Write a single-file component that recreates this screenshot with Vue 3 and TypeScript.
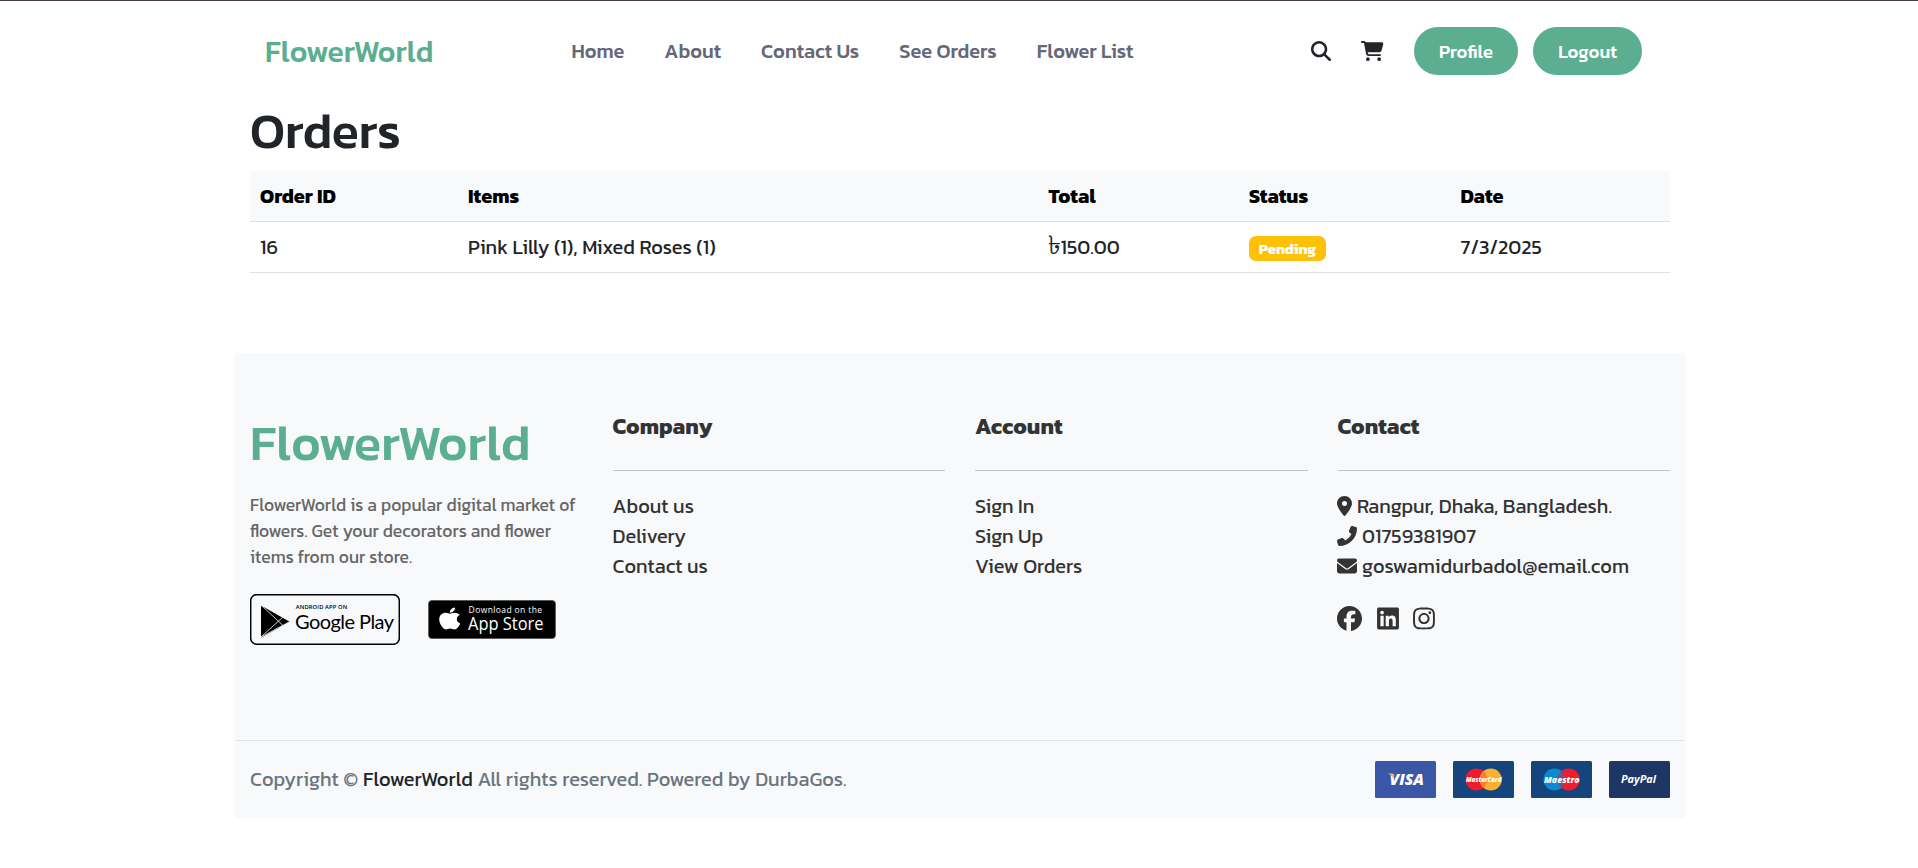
<script setup lang="ts">
interface Order {
  id: number
  items: string
  amount: string
  status: string
  date: string
}

interface LinkColumn {
  title: string
  links: string[]
}

const navLinks: string[] = ['Home', 'About', 'Contact Us', 'See Orders', 'Flower List']

const orders: Order[] = [
  { id: 16, items: 'Pink Lilly (1), Mixed Roses (1)', amount: '150.00', status: 'Pending', date: '7/3/2025' },
]

const columns: LinkColumn[] = [
  { title: 'Company', links: ['About us', 'Delivery', 'Contact us'] },
  { title: 'Account', links: ['Sign In', 'Sign Up', 'View Orders'] },
]
</script>

<template>
  <div class="page">
    <div class="container">
      <header class="navbar">
        <a class="brand">FlowerWorld</a>
        <nav class="links">
          <a v-for="link in navLinks" :key="link">{{ link }}</a>
        </nav>
        <div class="actions">
          <svg class="search" viewBox="0 0 512 512"><path d="M416 208c0 45.900-14.900 88.300-40 122.700L502.600 457.400c12.500 12.500 12.500 32.800 0 45.300s-32.800 12.500-45.300 0L330.700 376c-34.400 25.200-76.800 40-122.700 40C93.100 416 0 322.900 0 208S93.100 0 208 0S416 93.100 416 208zM208 352a144 144 0 1 0 0-288 144 144 0 1 0 0 288z" /></svg>
          <svg class="cart" viewBox="0 0 576 512"><path d="M0 24C0 10.700 10.700 0 24 0H69.500c22 0 41.500 12.800 50.600 32h411c26.300 0 45.500 25 38.600 50.400l-41 152.300c-8.500 31.400-37 53.300-69.500 53.300H170.700l5.400 28.500c2.200 11.300 12.100 19.500 23.600 19.500H488c13.300 0 24 10.700 24 24s-10.700 24-24 24H199.700c-34.600 0-64.300-24.600-70.700-58.500L77.400 54.500c-.7-3.800-4-6.500-7.900-6.500H24C10.700 48 0 37.300 0 24zM128 464a48 48 0 1 1 96 0 48 48 0 1 1 -96 0zm336-48a48 48 0 1 1 0 96 48 48 0 1 1 0-96z" /></svg>
          <button class="btn" type="button">Profile</button>
          <button class="btn" type="button">Logout</button>
        </div>
      </header>

      <main class="orders">
        <h1>Orders</h1>
        <table>
          <colgroup>
            <col class="c-id"><col class="c-items"><col class="c-total"><col class="c-status"><col>
          </colgroup>
          <thead>
            <tr><th>Order ID</th><th>Items</th><th>Total</th><th>Status</th><th>Date</th></tr>
          </thead>
          <tbody>
            <tr v-for="order in orders" :key="order.id">
              <td>{{ order.id }}</td>
              <td>{{ order.items }}</td>
              <td><span class="taka">৳</span>{{ order.amount }}</td>
              <td><span class="badge">{{ order.status }}</span></td>
              <td>{{ order.date }}</td>
            </tr>
          </tbody>
        </table>
      </main>

      <footer class="footer">
        <div class="grid">
          <section>
            <h2 class="logo">FlowerWorld</h2>
            <p class="about">FlowerWorld is a popular digital market of flowers. Get your decorators and flower items from our store.</p>
            <div class="stores">
              <svg width="150" height="51" viewBox="0 0 150 51">
                <rect x=".7" y=".7" width="148.600" height="49.600" rx="6" fill="none" stroke="#000" stroke-width="1.500" />
                <path d="M11.500 11.500q-.5.500-.5 1.500v29q0 1 .5 1.500L40 27.500z" />
                <path d="M11 11L33.500 32M11 43L33.500 22.500M11 11L40 27.500L11 43" fill="none" stroke="#f8f9fb" stroke-width=".8" />
                <text class="android" x="45.800" y="14.700" textLength="51.500">ANDROID APP ON</text>
                <text class="play" x="45" y="35" textLength="99">Google Play</text>
              </svg>
              <svg width="128" height="39" viewBox="0 0 128 39">
                <rect x=".3" y=".3" width="127.400" height="38.400" rx="4" stroke="#777" stroke-width=".6" />
                <svg x="11" y="6" width="21.500" height="25" viewBox="0 0 384 512" preserveAspectRatio="none"><path fill="#fff" d="M318.700 268.700c-.2-36.700 16.400-64.400 50-84.800-18.800-26.900-47.200-41.700-84.700-44.600-35.500-2.800-74.300 20.700-88.500 20.700-15 0-49.400-19.700-76.400-19.700C63.300 141.200 4 184.800 4 273.500q0 39.300 14.400 81.200c12.800 36.700 59 126.700 107.200 125.200 25.200-.6 43-17.900 75.800-17.900 31.800 0 48.300 17.900 76.400 17.900 48.600-.7 90.400-82.500 102.600-119.300-65.200-30.700-61.700-90-61.700-91.900zm-56.600-164.200c27.300-32.400 24.800-61.900 24-72.500-24.100 1.400-52 16.400-67.900 34.900-17.500 19.800-27.800 44.300-25.600 71.900 26.100 2 49.900-11.400 69.500-34.300z" /></svg>
                <text class="download" x="40.600" y="13.300" textLength="73.500">Download on the</text>
                <text class="appstore" x="40" y="30.200" textLength="75.500" lengthAdjust="spacingAndGlyphs">App Store</text>
              </svg>
            </div>
          </section>

          <section v-for="column in columns" :key="column.title">
            <h3>{{ column.title }}</h3>
            <ul>
              <li v-for="link in column.links" :key="link">{{ link }}</li>
            </ul>
          </section>

          <section>
            <h3>Contact</h3>
            <ul class="contact">
              <li><svg class="pin" viewBox="0 0 384 512"><path d="M215.700 499.200C267 435 384 279.400 384 192C384 86 298 0 192 0S0 86 0 192c0 87.400 117 243 168.300 307.200c12.300 15.300 35.100 15.300 47.400 0zM192 128a64 64 0 1 1 0 128 64 64 0 1 1 0-128z" /></svg>Rangpur, Dhaka, Bangladesh.</li>
              <li><svg class="icon" viewBox="0 0 512 512"><path transform="matrix(-1 0 0 1 512 0)" d="M164.900 24.600c-7.700-18.600-28-28.500-47.400-23.200l-88 24C12.100 30.200 0 46 0 64C0 311.400 200.600 512 448 512c18 0 33.800-12.100 38.600-29.500l24-88c5.300-19.400-4.600-39.700-23.200-47.400l-96-40c-16.300-6.800-35.200-2.100-46.300 11.600L304.700 368C234.300 334.700 177.300 277.700 144 207.300L193.300 167c13.700-11.200 18.400-30 11.600-46.300l-40-96z" /></svg>01759381907</li>
              <li><svg class="icon" viewBox="0 0 512 512"><path d="M48 64C21.500 64 0 85.500 0 112c0 15.100 7.100 29.300 19.200 38.400L236.800 313.600c11.400 8.500 27 8.500 38.400 0L492.800 150.400c12.100-9.100 19.200-23.300 19.200-38.400c0-26.500-21.500-48-48-48H48zM0 176V384c0 35.300 28.700 64 64 64H448c35.300 0 64-28.700 64-64V176L294.400 339.200c-22.800 17.100-54 17.100-76.800 0L0 176z" /></svg>goswamidurbadol@email.com</li>
            </ul>
            <div class="social">
              <svg class="fb" viewBox="0 0 512 512"><path d="M512 256C512 114.600 397.400 0 256 0S0 114.600 0 256C0 376 82.700 476.800 194.200 504.500V334.200H141.400V256h52.800V222.300c0-87.100 39.400-127.500 125-127.500c16.200 0 44.200 3.200 55.700 6.400V172c-6-.6-16.500-1-29.600-1c-42 0-58.200 15.900-58.200 57.200V256h83.600l-14.400 78.200H287V510.100C413.800 494.800 512 386.900 512 256z" /></svg>
              <svg class="sq" viewBox="0 0 448 512"><path d="M416 32H31.900C14.300 32 0 46.500 0 64.300v383.400C0 465.500 14.300 480 31.900 480H416c17.600 0 32-14.500 32-32.300V64.300c0-17.800-14.400-32.300-32-32.300zM135.400 416H69V202.200h66.500V416zm-33.200-243c-21.300 0-38.500-17.300-38.500-38.500S80.900 96 102.200 96c21.200 0 38.500 17.300 38.500 38.500 0 21.300-17.200 38.500-38.500 38.500zm282.100 243h-66.400V312c0-24.800-.5-56.700-34.500-56.700-34.600 0-39.900 27-39.900 54.900V416h-66.400V202.200h63.700v29.200h.9c8.900-16.800 30.600-34.500 62.900-34.500 67.200 0 79.700 44.300 79.700 101.900V416z" /></svg>
              <svg class="sq" viewBox="0 0 448 512"><path d="M224.100 141c-63.600 0-114.900 51.300-114.900 114.900s51.300 114.900 114.900 114.900S339 319.500 339 255.900 287.700 141 224.100 141zm0 189.600c-41.100 0-74.700-33.500-74.700-74.700s33.500-74.700 74.700-74.700 74.700 33.500 74.700 74.700-33.600 74.700-74.700 74.700zm146.400-194.300c0 14.900-12 26.800-26.800 26.800-14.900 0-26.800-12-26.800-26.800s12-26.800 26.800-26.800 26.800 12 26.800 26.800zm76.100 27.200c-1.700-35.900-9.900-67.700-36.200-93.900-26.200-26.200-58-34.400-93.900-36.200-37-2.100-147.900-2.100-184.900 0-35.800 1.700-67.600 9.900-93.900 36.100s-34.400 58-36.200 93.900c-2.100 37-2.100 147.900 0 184.900 1.700 35.900 9.900 67.700 36.200 93.900s58 34.400 93.900 36.200c37 2.100 147.900 2.100 184.900 0 35.900-1.700 67.700-9.900 93.900-36.200 26.200-26.200 34.400-58 36.200-93.900 2.100-37 2.100-147.800 0-184.800zM398.800 388c-7.800 19.600-22.900 34.700-42.600 42.600-29.500 11.700-99.500 9-132.100 9s-102.700 2.600-132.100-9c-19.600-7.800-34.700-22.900-42.600-42.600-11.700-29.500-9-99.500-9-132.100s-2.600-102.700 9-132.100c7.800-19.600 22.900-34.700 42.600-42.600 29.500-11.700 99.500-9 132.100-9s102.700-2.600 132.100 9c19.600 7.800 34.700 22.900 42.600 42.600 11.700 29.500 9 99.500 9 132.100s2.700 102.700-9 132.100z" /></svg>
            </div>
          </section>
        </div>

        <div class="bottom">
          <p>Copyright © <span class="name">FlowerWorld</span> All rights reserved. Powered by DurbaGos.</p>
          <div class="cards">
            <svg viewBox="0 0 61 37">
              <rect width="61" height="37" rx="1.500" fill="#3a57a7" />
              <text class="card-text" x="14.500" y="24" font-size="15.500" textLength="34.500" lengthAdjust="spacingAndGlyphs">VISA</text>
              <path d="M12.500 12.500h5.500l1.500 6q-2.500-4.500-7-6z" fill="#f4ae3c" />
            </svg>
            <svg viewBox="0 0 61 37">
              <rect width="61" height="37" rx="1.500" fill="#15457c" />
              <circle cx="23.500" cy="18.500" r="11" fill="#ed1c2e" /><circle cx="37.800" cy="18.500" r="11" fill="#fbb034" />
              <path d="M30.650 10.200a11 11 0 0 1 0 16.600a11 11 0 0 1 0-16.600z" fill="#f6822f" />
              <text class="card-text" x="13" y="21.300" font-size="7.500" textLength="35.500" lengthAdjust="spacingAndGlyphs">MasterCard</text>
            </svg>
            <svg viewBox="0 0 61 37">
              <rect width="61" height="37" rx="1.500" fill="#15457c" />
              <circle cx="23.500" cy="18.500" r="11" fill="#0a8bd0" /><circle cx="37.800" cy="18.500" r="11" fill="#ed1c2e" />
              <path d="M30.650 10.200a11 11 0 0 1 0 16.600a11 11 0 0 1 0-16.600z" fill="#75507f" />
              <text class="card-text" x="13" y="22" font-size="9.500" textLength="35.500" lengthAdjust="spacingAndGlyphs">Maestro</text>
            </svg>
            <svg viewBox="0 0 61 37">
              <rect width="61" height="37" rx="1.500" fill="#1d3663" />
              <text class="card-text paypal" x="12" y="22" font-size="10.500" textLength="35" lengthAdjust="spacingAndGlyphs">PayPal</text>
            </svg>
          </div>
        </div>
      </footer>
    </div>
  </div>
</template>

<style>
body {
  background: #fff;
}
</style>

<style scoped>
.page {
  box-sizing: border-box;
  min-height: 868px;
  padding-left: 2px;
  border-top: 1px solid #4b3e40;
  font: 400 20px/30px Kanit, "Noto Sans", sans-serif;
  color: #212529;
}
.page svg {
  flex: none;
}
.container {
  width: 1450px;
  margin: 0 auto;
}
.navbar {
  display: flex;
  align-items: center;
  height: 100px;
  padding: 0 43px 0 30px;
}
.brand {
  width: 306.500px;
  font-size: 30px;
  line-height: 45px;
  font-weight: 500;
  color: #5cae91;
}
.links {
  display: flex;
  gap: 40px;
  font-weight: 500;
  color: #656879;
}
.actions {
  display: flex;
  align-items: center;
  margin-left: auto;
}
.search {
  width: 20px;
  height: 20px;
  margin: -1px 30px 0 0;
}
.cart {
  width: 22.500px;
  height: 20px;
  margin: -1px 30px 0 0;
}
.search,
.cart {
  fill: #212529;
}
.btn {
  height: 48px;
  padding: 1px 25px 0;
  border: 0;
  border-radius: 25px;
  background: #5cae91;
  color: #fff;
  font: 500 18.500px/28px Kanit, "Noto Sans", sans-serif;
}
.btn + .btn {
  margin-left: 15px;
}
.orders {
  padding: 0 15px;
}
h1 {
  margin: 0 0 10px;
  font-size: 50px;
  line-height: 60px;
  font-weight: 500;
}
table {
  width: 1420px;
  table-layout: fixed;
  border-collapse: separate;
  border-spacing: 0;
}
.c-id { width: 208px; }
.c-items { width: 580.500px; }
.c-total { width: 200.500px; }
.c-status { width: 211.500px; }
th,
td {
  padding: 10px;
  border-bottom: 1px solid #dee2e6;
  text-align: left;
  font-weight: 400;
}
th {
  background: #f8f9fb;
  color: #000;
  font-weight: 700;
}
td {
  height: 30px;
}
.taka {
  margin-left: -1px;
  font-size: 26px;
  line-height: 20px;
}
.badge {
  display: inline-block;
  padding: 5px 9.750px;
  border-radius: 7px;
  background: #ffc107;
  color: #fff;
  font-size: 15px;
  line-height: 15px;
  font-weight: 700;
  letter-spacing: -0.120px;
}
.footer {
  margin-top: 80px;
  background: #f8f9fb;
}
.grid {
  display: grid;
  grid-template-columns: repeat(4, 1fr);
  box-sizing: border-box;
  height: 387px;
  padding-top: 60px;
}
.grid section {
  padding: 0 15px;
  color: #333;
}
.logo {
  margin: 0 0 19px;
  font-size: 50px;
  line-height: 60px;
  font-weight: 500;
  color: #5cae91;
}
.about {
  margin: 0;
  font-size: 17.500px;
  line-height: 26px;
  color: #666;
}
.stores {
  display: flex;
  align-items: center;
  gap: 28px;
  margin-top: 24px;
}
.android {
  font: 600 5.800px "Open Sans", sans-serif;
}
.play {
  font: 400 20px Lato, sans-serif;
}
.download {
  font: 400 8.500px "Open Sans", sans-serif;
  fill: #fff;
}
.appstore {
  font: 500 17.500px "Open Sans", sans-serif;
  fill: #fff;
}
h3 {
  margin: 0 0 20px;
  padding-bottom: 30px;
  border-bottom: 1px solid #c4c6c9;
  font-size: 22.400px;
  line-height: 27px;
  font-weight: 700;
  color: #333;
}
ul {
  margin: 0;
  padding: 0;
  list-style: none;
}
li {
  display: flex;
  align-items: center;
  height: 30px;
}
.contact,
.social {
  margin-left: -0.500px;
}
li svg {
  height: 20px;
  margin: -1px 5px 0 0;
  fill: #333;
}
.pin {
  width: 15px;
}
.icon {
  width: 20px;
}
.social {
  display: flex;
  align-items: center;
  gap: 14.500px;
  margin-top: 25px;
}
.social svg {
  height: 25px;
  fill: #333;
}
.fb {
  width: 25px;
}
.sq {
  width: 22px;
}
.bottom {
  display: flex;
  align-items: center;
  justify-content: space-between;
  height: 77px;
  padding: 0 15px;
  border-top: 1px solid #e2e5e8;
}
.bottom p {
  margin: 0 0 2px;
  color: #6c757d;
}
.name {
  color: #212529;
}
.cards {
  display: flex;
  gap: 17px;
}
.cards svg {
  width: 61px;
  height: 37px;
}
.card-text {
  font-family: "Open Sans", sans-serif;
  font-style: italic;
  font-weight: 800;
  fill: #fff;
}
.paypal {
  font-weight: 700;
}
</style>
